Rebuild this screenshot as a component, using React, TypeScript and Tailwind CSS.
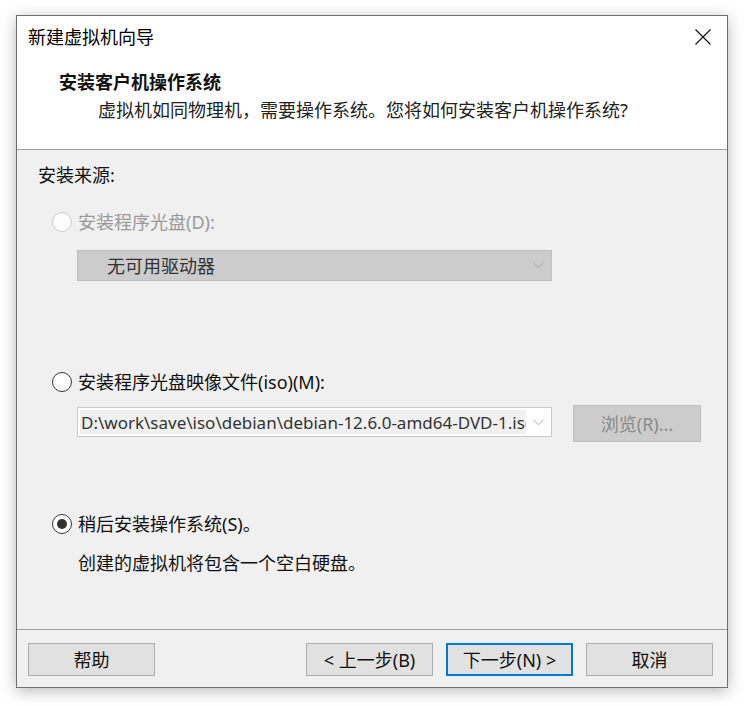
import React from 'react';

const FONT = '"Noto Sans", "Noto Sans CJK SC", sans-serif';

function Radio({ checked, disabled }: { checked?: boolean; disabled?: boolean }) {
  return (
    <span
      className={`w-[20px] h-[20px] rounded-full border flex items-center justify-center shrink-0 ${
        disabled ? 'border-[#cccccc] bg-[#fcfcfc]' : 'border-[#333333] bg-white'
      }`}
    >
      {checked && <span className="w-[10px] h-[10px] rounded-full bg-[#333333]" />}
    </span>
  );
}

function Chevron({ color }: { color: string }) {
  return (
    <svg width="11" height="7" viewBox="0 0 11 7" className="shrink-0">
      <path d="M0.5 0.8 L5.5 5.8 L10.5 0.8" fill="none" stroke={color} strokeWidth="1" />
    </svg>
  );
}

function Btn({ children, primary }: { children: React.ReactNode; primary?: boolean }) {
  return (
    <button
      className={`w-[127px] h-[33px] bg-[#e1e1e1] text-[18px] text-[#111] flex items-center justify-center leading-none ${
        primary ? 'border-2 border-[#0078d7]' : 'border border-[#adadad]'
      }`}
    >
      {children}
    </button>
  );
}

export default function App() {
  return (
    <div className="w-[746px] h-[706px] bg-white pl-[16px] pt-[15px]" style={{ fontFamily: FONT }}>
      <div className="w-[712px] h-[673px] border border-[#707070] shadow-[0_3px_14px_rgba(0,0,0,0.28)] flex flex-col bg-[#f0f0f0]">
        {/* header */}
        <div className="h-[134px] bg-white border-b border-[#a0a0a0] shrink-0 flex flex-col">
          <div className="h-[42px] flex items-center justify-between pl-[11px] pr-[16px]">
            <span className="text-[18px] text-black leading-none">新建虚拟机向导</span>
            <svg width="16" height="16" viewBox="0 0 16 16">
              <path d="M0.5 0.5 L15.5 15.5 M15.5 0.5 L0.5 15.5" stroke="#111" strokeWidth="1.2" fill="none" />
            </svg>
          </div>
          <div className="pl-[42px] h-[26px] flex items-center mt-[11px]">
            <span className="text-[18px] font-bold text-[#111] leading-none">安装客户机操作系统</span>
          </div>
          <div className="pl-[81px] h-[26px] flex items-center mt-[2px]">
            <span className="text-[18px] text-[#222] leading-none">虚拟机如同物理机，需要操作系统。您将如何安装客户机操作系统?</span>
          </div>
        </div>

        {/* body */}
        <div className="flex-1 flex flex-col pl-[21px] text-[18px] text-[#111]">
          <div className="h-[24px] mt-[13px] flex items-center leading-none">安装来源:</div>

          <div className="h-[24px] mt-[23px] flex items-center gap-[6px] pl-[14px] leading-none text-[#9a9a9a]">
            <Radio disabled />
            <span>安装程序光盘(D):</span>
          </div>
          <div className="ml-[39px] mt-[16px] w-[475px] h-[31px] bg-[#cccccc] border border-[#bfbfbf] flex items-center justify-between pl-[29px] pr-[7px]">
            <span className="leading-none text-[#333]">无可用驱动器</span>
            <Chevron color="#a8a8a8" />
          </div>

          <div className="h-[24px] mt-[89px] flex items-center gap-[6px] pl-[14px] leading-none">
            <Radio />
            <span>安装程序光盘映像文件(iso)(M):</span>
          </div>
          <div className="ml-[39px] mt-[11px] flex items-start gap-[21px]">
            <div className="mt-[2px] w-[475px] h-[30px] bg-white border border-[#c9c9c9] flex items-center p-[2px] pr-[7px]">
              <div className="flex-1 h-full bg-[#f0f0f0] overflow-hidden whitespace-nowrap flex items-center pl-[1px] mr-[7px]">
                <span className="leading-none text-[17px] text-[#333]">D:\work\save\iso\debian\debian-12.6.0-amd64-DVD-1.iso</span>
              </div>
              <Chevron color="#a8a8a8" />
            </div>
            <div className="w-[128px] h-[37px] bg-[#cccccc] border border-[#bfbfbf] flex items-center justify-center leading-none text-[#8a8a8a]">
              浏览(R)...
            </div>
          </div>

          <div className="h-[24px] mt-[70px] flex items-center gap-[6px] pl-[14px] leading-none">
            <Radio checked />
            <span>稍后安装操作系统(S)。</span>
          </div>
          <div className="h-[24px] mt-[15px] pl-[40px] flex items-center leading-none">创建的虚拟机将包含一个空白硬盘。</div>
        </div>

        {/* footer */}
        <div className="h-[58px] border-t border-[#a0a0a0] shrink-0 flex items-start pt-[13px] pl-[11px] pr-[14px]">
          <Btn>帮助</Btn>
          <div className="flex-1" />
          <div className="flex gap-[13px]">
            <Btn>&lt; 上一步(B)</Btn>
            <Btn primary>下一步(N) &gt;</Btn>
            <Btn>取消</Btn>
          </div>
        </div>
      </div>
    </div>
  );
}
